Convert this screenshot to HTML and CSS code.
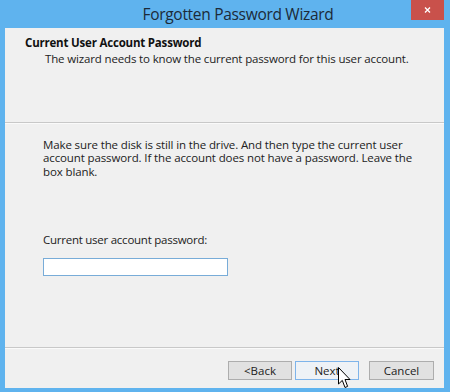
FILE: index.html
```html
<!DOCTYPE html>
<html>
<head>
<meta charset="utf-8">
<link rel="stylesheet" href="styles.css">
</head>
<body>
<div class="window">
  <div class="titlebar">
    <div class="title">Forgotten Password Wizard</div>
    <div class="close"><svg width="7" height="6" viewBox="0 0 7 6"><path d="M1 0.5 L6 5.5 M6 0.5 L1 5.5" stroke="#fff" stroke-width="1.3"/></svg></div>
  </div>
  <div class="client">
    <div class="header">
      <div class="h-title">Current User Account Password</div>
      <div class="h-sub">The wizard needs to know the current password for this user account.</div>
    </div>
    <div class="body">
      <p class="intro">Make sure the disk is still in the drive. And then type the current user account password. If the account does not have a password. Leave the box blank.</p>
      <label class="label" for="pw">Current user account password:</label>
      <input id="pw" class="input" type="password">
    </div>
    <div class="footer">
      <button class="btn">&lt;Back</button>
      <button class="btn btn-focus">Next</button>
      <button class="btn btn-cancel">Cancel</button>
    </div>
  </div>
  <svg class="cursor" width="13" height="22" viewBox="0 0 13 22"><path d="M0.5 0.5 L0.5 17 L4.3 13.4 L7 20.5 L9.6 19.4 L7 12.5 L12 12.5 Z" fill="#fff" stroke="#000" stroke-width="1" stroke-linejoin="miter"/></svg>
</div>
</body>
</html>
```
FILE: styles.css
```css
* { box-sizing: border-box; }
html, body { margin: 0; padding: 0; }
body {
  width: 450px;
  height: 392px;
  overflow: hidden;
  font-family: "Open Sans", "Noto Sans", sans-serif;
  color: #1a1a1a;
}
.window {
  position: relative;
  width: 450px;
  height: 392px;
  background: #5fb3ee;
  padding: 0 6px 4px 5px;
  display: flex;
  flex-direction: column;
}
.titlebar {
  height: 28px;
  display: flex;
  align-items: flex-start;
}
.title {
  flex: 1;
  text-align: center;
  padding-left: 60px;
  font-size: 15.5px;
  letter-spacing: -0.3px;
  line-height: 28px;
  color: #1c2a38;
}
.close {
  width: 33px;
  height: 20px;
  background: #c9514b;
  display: flex;
  align-items: center;
  justify-content: center;
}
.close svg { display: block; }
.client {
  flex: 1;
  background: #f0f0f0;
  display: flex;
  flex-direction: column;
}
.header {
  height: 95px;
  padding: 7px 0 0 20px;
  border-bottom: 1px solid #c8c8c8;
  box-shadow: 0 1px 0 #fafafa;
}
.h-title {
  font-weight: bold;
  font-size: 11.5px;
  letter-spacing: -0.2px;
  line-height: 16px;
  color: #111;
}
.h-sub {
  padding-left: 20px;
  font-size: 11.5px;
  letter-spacing: -0.15px;
  line-height: 15px;
  color: #222;
}
.body {
  flex: 1;
  padding: 15px 0 0 38px;
  display: flex;
  flex-direction: column;
  align-items: flex-start;
  border-bottom: 1px solid #c8c8c8;
}
.intro {
  margin: 0;
  width: 376px;
  font-size: 11.5px;
  letter-spacing: -0.12px;
  line-height: 13.3px;
  color: #222;
}
.label {
  margin-top: 54px;
  font-size: 11.5px;
  letter-spacing: -0.25px;
  line-height: 16px;
  color: #222;
}
.input {
  margin-top: 10px;
  width: 185px;
  height: 18px;
  border: 1px solid #78acd8;
  background: #fff;
  padding: 0;
  outline: none;
}
.footer {
  height: 40px;
  display: flex;
  justify-content: flex-end;
  align-items: flex-start;
  padding: 13px 10px 0 0;
  gap: 3px;
  box-shadow: inset 0 1px 0 #fafafa;
}
.btn {
  width: 64px;
  height: 19px;
  padding: 0;
  font-family: "Open Sans", "Noto Sans", sans-serif;
  font-size: 11.5px;
  line-height: 17px;
  color: #222;
  background: #e1e1e1;
  border: 1px solid #adadad;
}
.btn-focus {
  background: #eef2f6;
  border-color: #7eb4ea;
}
.btn-cancel { margin-left: 7px; width: 65px; }
.cursor {
  position: absolute;
  left: 338px;
  top: 367px;
}
```
